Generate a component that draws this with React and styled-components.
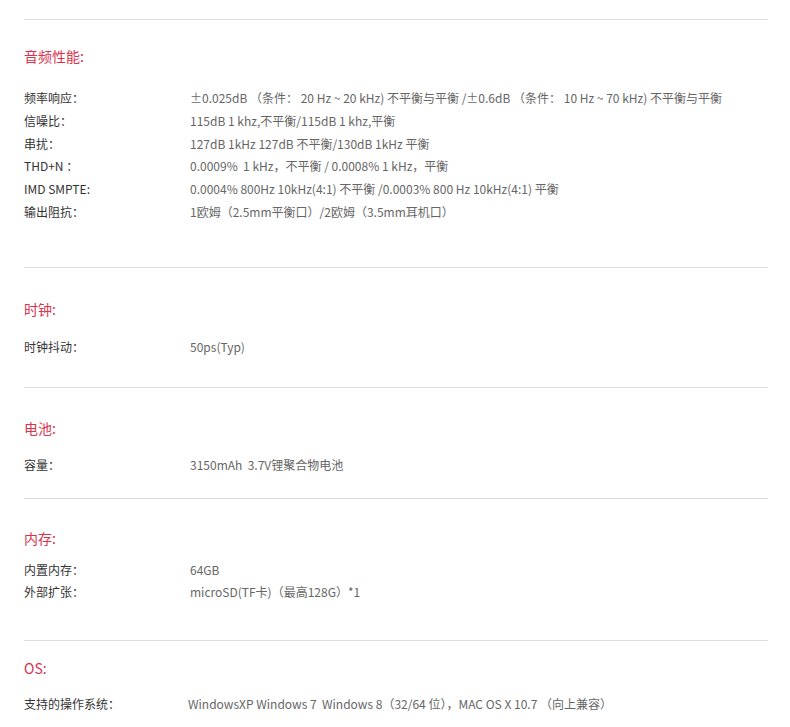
import React from "react";
import styled, { createGlobalStyle } from "styled-components";

const Global = createGlobalStyle`
  html, body { margin: 0; padding: 0; background: #fff; }
  body { font-family: "Noto Sans CJK SC", "Liberation Sans", sans-serif; }
`;

const Page = styled.div`
  width: 790px;
  padding: 19px 22px 0 24px;
  box-sizing: border-box;
`;

const Section = styled.section`
  border-top: 1px solid #dcdcdc;
  padding-top: ${(p) => p.$pt}px;
  padding-bottom: ${(p) => p.$pb}px;
`;

const Heading = styled.h3`
  margin: 0 0 ${(p) => p.$gap}px 0;
  font-size: 14px;
  font-weight: normal;
  line-height: 20px;
  height: 20px;
  color: #d8344e;
`;

const Rows = styled.div`
  display: grid;
  grid-template-columns: ${(p) => p.$labelW || 166}px 1fr;
  grid-auto-rows: ${(p) => p.$rowH}px;
  align-items: center;
  font-size: 12px;
  line-height: 16px;
`;

const Label = styled.div`
  color: #333;
  white-space: pre;
`;

const Value = styled.div`
  color: #666;
  white-space: pre;
`;

const sections = [
  {
    title: "音频性能:",
    pt: 26, gap: 20.6, pb: 43.6, rowH: 22.8,
    rows: [
      ["频率响应：", "±0.025dB （条件： 20 Hz ~ 20 kHz) 不平衡与平衡 /±0.6dB （条件： 10 Hz ~ 70 kHz) 不平衡与平衡"],
      ["信噪比：", "115dB 1 khz,不平衡/115dB 1 khz,平衡"],
      ["串扰：", "127dB 1kHz 127dB 不平衡/130dB 1kHz 平衡"],
      ["THD+N ：", "0.0009%  1 kHz，不平衡 / 0.0008% 1 kHz，平衡"],
      ["IMD SMPTE:", "0.0004% 800Hz 10kHz(4:1) 不平衡 /0.0003% 800 Hz 10kHz(4:1) 平衡"],
      ["输出阻抗：", "1欧姆（2.5mm平衡口）/2欧姆（3.5mm耳机口）"],
    ],
  },
  {
    title: "时钟:",
    pt: 31, gap: 16.5, pb: 28.5, rowH: 23,
    rows: [["时钟抖动：", "50ps(Typ)"]],
  },
  {
    title: "电池:",
    pt: 30, gap: 15.5, pb: 21.5, rowH: 23,
    rows: [["容量：", "3150mAh  3.7V锂聚合物电池"]],
  },
  {
    title: "内存:",
    pt: 29, gap: 11, pb: 37, rowH: 22,
    rows: [
      ["内置内存：", "64GB"],
      ["外部扩张：", "microSD(TF卡)（最高128G）*1"],
    ],
  },
  {
    title: "OS:",
    pt: 17, gap: 14.5, pb: 10, rowH: 23, labelW: 164,
    rows: [["支持的操作系统：", "WindowsXP Windows 7  Windows 8（32/64 位），MAC OS X 10.7 （向上兼容）"]],
  },
];

export default function App() {
  return (
    <>
      <Global />
      <Page>
        {sections.map((s) => (
          <Section key={s.title} $pt={s.pt} $pb={s.pb}>
            <Heading $gap={s.gap}>{s.title}</Heading>
            <Rows $rowH={s.rowH} $labelW={s.labelW}>
              {s.rows.map(([l, v]) => (
                <React.Fragment key={l}>
                  <Label>{l}</Label>
                  <Value>{v}</Value>
                </React.Fragment>
              ))}
            </Rows>
          </Section>
        ))}
      </Page>
    </>
  );
}
